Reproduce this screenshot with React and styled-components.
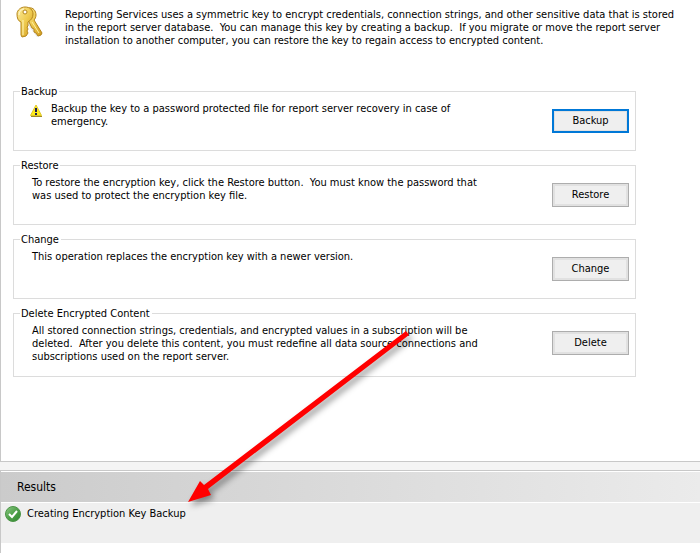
import React from 'react';
import styled, { createGlobalStyle } from 'styled-components';

const GlobalStyle = createGlobalStyle`
  * {
    box-sizing: border-box;
  }

  body {
    margin: 0;
    background-color: #fff;
    color: #000;
    font-family: 'DejaVu Sans Condensed', 'DejaVu Sans', Tahoma, sans-serif;
    font-size: 11px;
    line-height: 13px;
  }
`;

const Page = styled.div`
  position: relative;
  display: flex;
  flex-direction: column;
  min-height: 100vh;
  background-color: #f4f4f4;
`;

const Panel = styled.main`
  padding: 6px 16px 84px 12px;
  background-color: #fff;
  border-left: 1px solid #c8c8c8;
  border-bottom: 1px solid #c8c8c8;
`;

const Intro = styled.header`
  display: flex;
  align-items: flex-start;
  gap: 20px;
  min-height: 79px;
`;

const Text = styled.p`
  margin: 0;
  white-space: pre-wrap;
`;

const IntroText = styled(Text)`
  padding-top: 2px;
`;

const Groups = styled.div`
  display: flex;
  flex-direction: column;
  gap: 8px;
  margin-right: 48px;
`;

const Group = styled.fieldset`
  display: flex;
  align-items: flex-start;
  min-width: 0;
  min-height: ${props => (props.$tall ? 70 : 66)}px;
  margin: 0;
  padding: 4px 6px 0 6px;
  border: 1px solid #dcdcdc;
`;

const Legend = styled.legend`
  padding: 0 2px 0 1px;
`;

const IconSlot = styled.div`
  flex: none;
  width: ${props => (props.$wide ? 31 : 12)}px;
  padding: 2px 0 0 10px;
`;

const GroupText = styled(Text)`
  flex: 1;
`;

const Button = styled.button`
  flex: none;
  width: 77px;
  height: 24px;
  margin-top: 7px;
  padding: 0 0 2px;
  border: ${props => (props.$active ? '2px solid #0078d7' : '1px solid #adadad')};
  box-shadow: inset 0 0 0 ${props => (props.$active ? 1 : 2)}px #e1e1e1;
  background-color: #efefef;
  color: inherit;
  font: inherit;
`;

const Results = styled.section`
  flex: 1;
  margin-top: 8px;
  background-color: #fff;
  border-left: 1px solid #c8c8c8;
  border-top: 1px solid #c8c8c8;
`;

const ResultsTitle = styled.h2`
  margin: 1px 0;
  padding: 8px 16px;
  background: linear-gradient(to right, #cbcbcb, #ebebeb);
  font-size: 12px;
  font-weight: normal;
  line-height: 14px;
`;

const ResultRow = styled.div`
  display: flex;
  align-items: flex-start;
  gap: 5px;
  height: 40px;
  padding: 2px 3px;
  background-color: #efefef;
`;

const ResultText = styled.span`
  padding-top: 2px;
`;

const Arrow = styled.svg`
  position: absolute;
  left: 180px;
  top: 320px;
  pointer-events: none;
  filter: drop-shadow(3px 4px 3px rgba(0, 0, 0, 0.4));
`;

const Svg = styled.svg`
  display: block;
  flex: none;
`;

const KeysIcon = () => (
  <Svg width="32" height="32" viewBox="0 0 32 32">
    <defs>
      <linearGradient id="gold" x1="0" y1="0" x2="1" y2="1">
        <stop offset="0" stopColor="#fbeb9c" />
        <stop offset="0.5" stopColor="#efcb50" />
        <stop offset="1" stopColor="#cf9a1e" />
      </linearGradient>
    </defs>
    <path d="M15 19l4-3 9 14-4 1z" fill="#000" opacity="0.1" />
    <g stroke="#b5851a" strokeLinejoin="round" fill="url(#gold)">
      <path d="M16 2c4-1 7 3 7 7 0 2-1 4-2 5l8 13-1 2-3 1-2-3-2-1v-3l-2-1-4-8c-4-3-4-10 1-12z" />
      <path d="M12 1c5 0 8 3 8 7 0 4-2 6-5 8v4l-1 1 1 2-1 2 1 2-2 3-4 1-1-2V16c-3-1-4-4-4-8 0-4 4-7 8-7z" />
    </g>
    <path d="M10 14v15" stroke="#fff4b5" strokeWidth="1" />
    <path d="M19 16l7 11" stroke="#fff0a0" strokeWidth="1" />
    <path d="M6 9c0-3 2-6 5-6" stroke="#fff9d8" strokeWidth="1" fill="none" />
    <circle cx="12" cy="6" r="2" fill="#fff" stroke="#b5851a" />
  </Svg>
);

const WarningIcon = () => (
  <Svg width="13" height="13" viewBox="0 0 13 13">
    <path d="M6 1L11.5 11.5H0.5z" fill="#ffec1a" stroke="#e0c828" strokeLinejoin="round" />
    <path d="M1 12.5h11" stroke="#a08a24" />
    <path d="M6 4v4M6 9v2" stroke="#1c1c50" strokeWidth="2" />
  </Svg>
);

const SuccessIcon = () => (
  <Svg width="18" height="18" viewBox="0 0 18 18">
    <defs>
      <linearGradient id="green" x1="0" y1="0" x2="1" y2="1">
        <stop offset="0" stopColor="#8fcb86" />
        <stop offset="0.5" stopColor="#4fa04a" />
        <stop offset="1" stopColor="#2f8a2f" />
      </linearGradient>
    </defs>
    <circle cx="9" cy="9" r="7.5" fill="url(#green)" stroke="#4c9448" />
    <path d="M5 9l3 3L13 6" fill="none" stroke="#fff" strokeWidth="2" />
  </Svg>
);

const groups = [
  {
    title: 'Backup',
    text: 'Backup the key to a password protected file for report server recovery in case of\nemergency.',
    warning: true,
    active: true,
    action: 'Backup'
  },
  {
    title: 'Restore',
    text: 'To restore the encryption key, click the Restore button.  You must know the password that\nwas used to protect the encryption key file.',
    action: 'Restore'
  },
  {
    title: 'Change',
    text: 'This operation replaces the encryption key with a newer version.',
    action: 'Change'
  },
  {
    title: 'Delete Encrypted Content',
    text: 'All stored connection strings, credentials, and encrypted values in a subscription will be\ndeleted.  After you delete this content, you must redefine all data source connections and\nsubscriptions used on the report server.',
    tall: true,
    action: 'Delete'
  }
];

const ActionGroup = ({ title, text, warning, tall, active, action }) => (
  <Group $tall={tall}>
    <Legend>{title}</Legend>
    <IconSlot $wide={warning}>{warning && <WarningIcon />}</IconSlot>
    <GroupText>{text}</GroupText>
    <Button type="button" $active={active}>{action}</Button>
  </Group>
);

const App = () => (
  <>
    <GlobalStyle />
    <Page>
      <Panel>
        <Intro>
          <KeysIcon />
          <IntroText>
            {'Reporting Services uses a symmetric key to encrypt credentials, connection strings, and other sensitive data that is stored\nin the report server database.  You can manage this key by creating a backup.  If you migrate or move the report server\ninstallation to another computer, you can restore the key to regain access to encrypted content.'}
          </IntroText>
        </Intro>
        <Groups>
          {groups.map(group => (
            <ActionGroup key={group.title} {...group} />
          ))}
        </Groups>
      </Panel>
      <Results>
        <ResultsTitle>Results</ResultsTitle>
        <ResultRow>
          <SuccessIcon />
          <ResultText>Creating Encryption Key Backup</ResultText>
        </ResultRow>
      </Results>
      <Arrow width="240" height="195" viewBox="0 0 240 195">
        <path d="M226 11l3 4L28 169l3 6-23 7 12-21 4 4z" fill="#f00" />
      </Arrow>
    </Page>
  </>
);

export default App;
